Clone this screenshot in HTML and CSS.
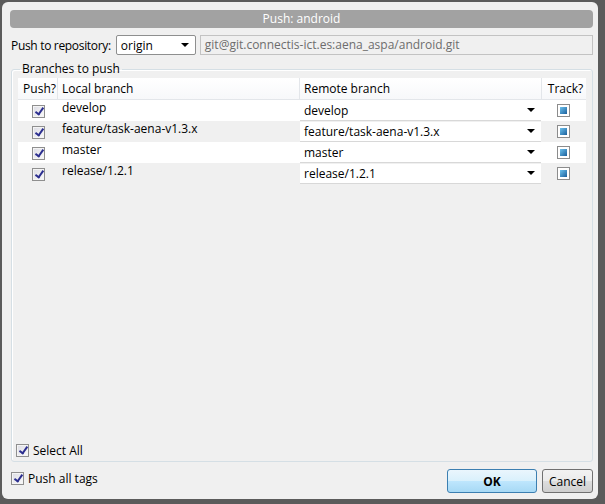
FILE: index.html
```html
<!DOCTYPE html>
<html>
<head>
<meta charset="utf-8">
<link rel="stylesheet" href="styles.css">
</head>
<body>
<div class="desk">
  <div class="win">
    <div class="title">Push: android</div>
    <div class="repo-row">
      <span class="lbl">Push to repository:</span>
      <div class="combo repo-combo"><span>origin</span><span class="arrow"></span></div>
      <div class="url">git@git.connectis-ict.es:aena_aspa/android.git</div>
    </div>
    <fieldset class="group">
      <legend>Branches to push</legend>
      <div class="table">
        <div class="row head">
          <div class="c1">Push?</div>
          <div class="c2">Local branch</div>
          <div class="c3">Remote branch</div>
          <div class="c4">Track?</div>
        </div>
        <div class="row">
          <div class="c1"><span class="cb"></span></div>
          <div class="c2">develop</div>
          <div class="c3"><div class="combo cell-combo"><span>develop</span><span class="arrow"></span></div></div>
          <div class="c4"><span class="tb"></span></div>
        </div>
        <div class="row alt">
          <div class="c1"><span class="cb"></span></div>
          <div class="c2">feature/task-aena-v1.3.x</div>
          <div class="c3"><div class="combo cell-combo"><span>feature/task-aena-v1.3.x</span><span class="arrow"></span></div></div>
          <div class="c4"><span class="tb"></span></div>
        </div>
        <div class="row">
          <div class="c1"><span class="cb"></span></div>
          <div class="c2">master</div>
          <div class="c3"><div class="combo cell-combo"><span>master</span><span class="arrow"></span></div></div>
          <div class="c4"><span class="tb"></span></div>
        </div>
        <div class="row alt">
          <div class="c1"><span class="cb"></span></div>
          <div class="c2">release/1.2.1</div>
          <div class="c3"><div class="combo cell-combo"><span>release/1.2.1</span><span class="arrow"></span></div></div>
          <div class="c4"><span class="tb"></span></div>
        </div>
      </div>
      <div class="spacer"></div>
      <label class="check select-all"><span class="cb"></span>Select All</label>
    </fieldset>
    <div class="bottom">
      <label class="check"><span class="cb"></span>Push all tags</label>
      <div class="buttons">
        <button class="btn ok">OK</button>
        <button class="btn">Cancel</button>
      </div>
    </div>
  </div>
</div>
</body>
</html>
```
FILE: styles.css
```css
html, body {
  margin: 0;
  padding: 0;
  width: 605px;
  height: 504px;
  overflow: hidden;
  background: #5b5b5b;
  font-family: "Open Sans", "DejaVu Sans", sans-serif;
  font-size: 12px;
  color: #000;
}
.desk {
  padding: 2px 7px 5px 2px;
  height: 504px;
  box-sizing: border-box;
}
.win {
  height: 497px;
  background: #f0f0f0;
  border-radius: 6px;
  padding: 8px 5px 0 8px;
  box-sizing: border-box;
  display: flex;
  flex-direction: column;
}
.title {
  height: 18px;
  background: #a2a2a2;
  border-radius: 4px;
  color: #fff;
  text-align: center;
  line-height: 18px;
  font-size: 12px;
  margin: 0 0 7px 0;
}
.repo-row {
  display: flex;
  align-items: center;
  height: 20px;
  margin-left: 1px;
}
.lbl { margin-right: 5px; letter-spacing: -0.32px; }
.combo {
  display: flex;
  align-items: center;
  justify-content: space-between;
  background: #fff;
  box-sizing: border-box;
}
.repo-combo {
  width: 80px;
  height: 20px;
  border: 1px solid #8e8f8f;
  border-radius: 2px;
  padding: 0 6px 0 4px;
  margin-right: 4px;
}
.arrow {
  width: 0; height: 0;
  border-left: 4px solid transparent;
  border-right: 4px solid transparent;
  border-top: 4px solid #000;
}
.url {
  flex: 1;
  height: 20px;
  border: 1px solid #c3c3c3;
  box-sizing: border-box;
  padding: 0 4px;
  line-height: 18px;
  color: #6d6d6d;
  background: #f0f0f0;
}
.group {
  margin: 7px 0 0 1px;
  border: 1px solid #d5dfe5;
  border-radius: 3px;
  padding: 2px 6px 2px 6px;
  flex: 1;
  display: flex;
  flex-direction: column;
  min-height: 0;
  box-shadow: inset 1px 1px 0 #fff;
}
.group legend {
  padding: 0 2px;
  margin-left: 2px;
  line-height: 14px;
}
.table {
  display: flex;
  flex-direction: column;
}
.row {
  display: grid;
  grid-template-columns: 40px 242px 242px 43px;
  height: 21px;
  align-items: center;
  background: #fff;
}
.row.alt { background: #f0f0f0; }
.row.head {
  background: linear-gradient(#fff, #f7f8fa);
  height: 21px;
  border-bottom: 1px solid #e3e6ea;
}
.head > div {
  height: 100%;
  display: flex;
  align-items: center;
  border-right: 1px solid #e3e6ea;
  padding-left: 4px;
}
.head > .c4 { border-right: none; }
.row > .c1, .row > .c4 { display: flex; justify-content: center; }
.row:not(.head) > .c2 { padding-left: 4px; position: relative; top: -3px; }
.row > .c3 { height: 100%; display: flex; align-items: center; }
.cell-combo {
  width: 241px;
  height: 20px;
  border-bottom: 1px solid #d8d8d8;
  padding: 0 6px 0 4px;
}
.cb {
  display: inline-block;
  width: 13px;
  height: 13px;
  border: 1px solid #8f8f8f;
  background: linear-gradient(135deg, #dcdce4, #fafafa);
  box-shadow: inset 0 0 0 1px #f4f4f4;
  position: relative;
  box-sizing: border-box;
  flex: none;
}
.cb::after {
  content: "";
  position: absolute;
  left: 4px;
  top: 0px;
  width: 3px;
  height: 7px;
  border-right: 2px solid #2b2e8f;
  border-bottom: 2px solid #2b2e8f;
  transform: rotate(35deg);
}
.row .cb { margin-top: 2px; margin-left: 1px; }
.tb {
  display: inline-block;
  width: 13px;
  height: 13px;
  border: 1px solid #8c8c8c;
  box-sizing: border-box;
  background: #fff;
  position: relative;
}
.tb::after {
  content: "";
  position: absolute;
  left: 2px; top: 2px; right: 2px; bottom: 2px;
  background: linear-gradient(135deg, #6cc2ee, #1b5f9c);
}
.spacer { flex: 1; }
.check {
  display: flex;
  align-items: center;
  gap: 4px;
}
.select-all { margin-left: -2px; margin-bottom: 0; }
.bottom {
  display: flex;
  justify-content: space-between;
  align-items: flex-start;
  padding: 7px 0 0 1px;
  height: 37px;
  box-sizing: border-box;
}
.bottom .check { margin-top: 1px; }
.buttons { display: flex; gap: 5px; }
.btn {
  font-family: inherit;
  font-size: 12px;
  height: 24px;
  border: 1px solid #707070;
  border-radius: 3px;
  background: linear-gradient(#f2f2f2 0%, #ebebeb 50%, #dddddd 51%, #cfcfcf 100%);
  padding: 0;
  width: 51px;
  color: #000;
}
.btn.ok {
  width: 90px;
  font-weight: bold;
  border-color: #3c7fb1;
  background: linear-gradient(#eaf6fd 0%, #d9f0fc 50%, #bee6fd 51%, #a7d9f5 100%);
}
```
